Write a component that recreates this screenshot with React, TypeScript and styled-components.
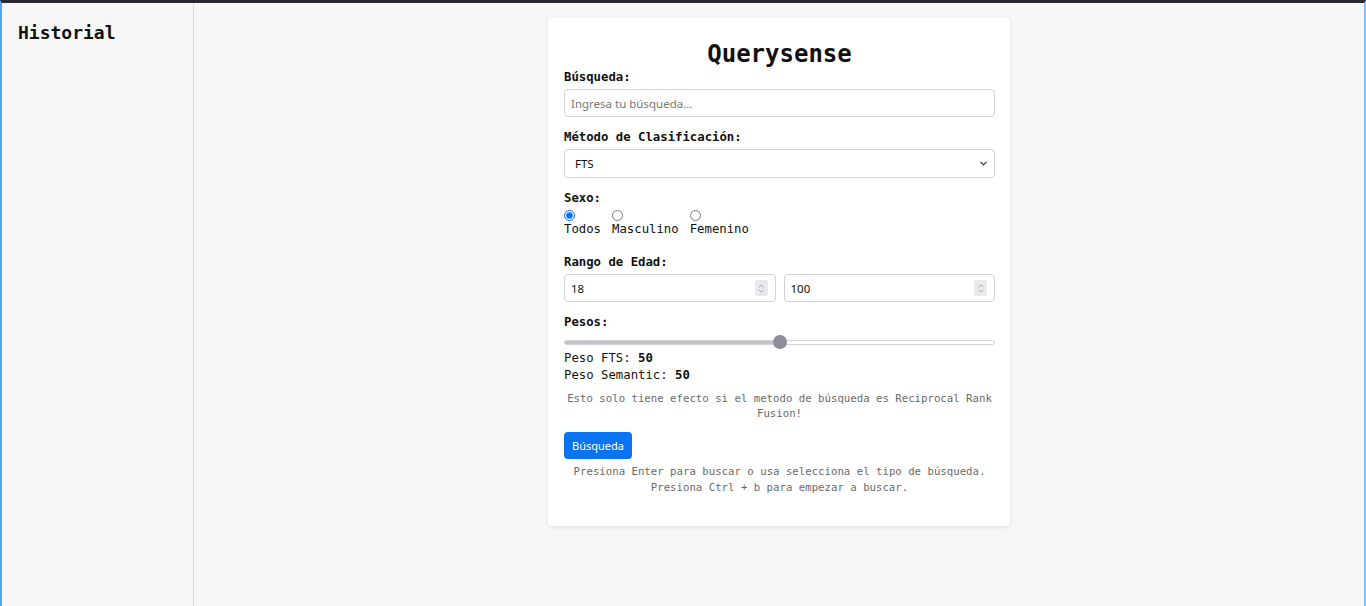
import styled, { createGlobalStyle } from "styled-components";
import { ChevronDown, ChevronUp } from "lucide-react";

const GlobalStyle = createGlobalStyle`
  * { box-sizing: border-box; }
  html, body {
    margin: 0;
    padding: 0;
    background: #f7f7f7;
  }
  body {
    font-family: "DejaVu Sans Mono", "Liberation Mono", monospace;
    color: #111;
  }
`;

const Shell = styled.div`
  display: flex;
  min-height: 100vh;
  border-top: 3px solid #2b2a33;
  border-left: 2px solid #58a6e3;
  border-right: 2px solid #7fc5f5;
  background: #f7f7f7;
`;

const Sidebar = styled.aside`
  width: 192px;
  flex-shrink: 0;
  border-right: 1px solid #dcdcdc;
  padding: 19px 16px;
`;

const SidebarTitle = styled.h2`
  margin: 0;
  font-size: 18px;
  line-height: 22px;
  font-weight: bold;
`;

const Main = styled.main`
  flex: 1;
  display: flex;
  justify-content: center;
  align-items: flex-start;
  padding-top: 15px;
`;

const Card = styled.section`
  width: 462px;
  background: #fff;
  border-radius: 4px;
  box-shadow: 0 1px 4px rgba(0, 0, 0, 0.1);
  padding: 16px 15px 30px 16px;
`;

const Title = styled.h1`
  margin: 6px 0 0;
  text-align: center;
  font-size: 24px;
  line-height: 29px;
  font-weight: bold;
`;

const Field = styled.div<{ $gap?: number }>`
  margin-bottom: ${(p) => p.$gap ?? 12}px;
`;

const Label = styled.label`
  display: block;
  font-size: 12.3px;
  line-height: 16px;
  font-weight: bold;
  margin-bottom: 4px;
`;

const controlBase = `
  width: 100%;
  border: 1px solid #d2d2d2;
  border-radius: 4px;
  background: #fff;
  font-family: "Noto Sans", sans-serif;
  font-size: 11.5px;
  color: #111;
  padding: 0 6px;
  outline: none;
`;

const TextInput = styled.input`
  ${controlBase}
  height: 28px;
  &::placeholder { color: #777; }
`;

const SelectWrap = styled.div`
  position: relative;
`;

const Select = styled.select`
  ${controlBase}
  appearance: none;
  height: 29px;
  padding: 0 24px 0 10px;
`;

const SelectIcon = styled(ChevronDown)`
  position: absolute;
  right: 6px;
  top: 9px;
  pointer-events: none;
  color: #222;
`;

const RadioRow = styled.div`
  display: flex;
  gap: 11px;
`;

const RadioOption = styled.label`
  display: flex;
  flex-direction: column;
  align-items: flex-start;
  font-size: 12.3px;
  line-height: 16px;
`;

const Radio = styled.input`
  margin: 0;
  width: 11px;
  height: 11px;
`;

const AgeRow = styled.div`
  display: flex;
  gap: 8px;
`;

const NumberWrap = styled.div`
  position: relative;
  flex: 1;
`;

const NumberInput = styled.input`
  ${controlBase}
  height: 28px;
  padding-right: 26px;
  appearance: textfield;

  &::-webkit-inner-spin-button,
  &::-webkit-outer-spin-button {
    appearance: none;
    margin: 0;
  }
`;

const Spinner = styled.div`
  position: absolute;
  right: 8px;
  top: 6px;
  width: 13px;
  height: 16px;
  display: flex;
  flex-direction: column;
  align-items: center;
  justify-content: center;
  background: #e9e9ed;
  border-radius: 2px;
  color: #8a8a8a;
  pointer-events: none;

  svg { display: block; margin: -1.5px 0; }
`;

const Range = styled.input<{ $fill: number }>`
  display: block;
  width: 100%;
  height: 16px;
  margin: 0;
  appearance: none;
  background: transparent;

  &::-webkit-slider-runnable-track {
    height: 5px;
    border-radius: 3px;
    border: 1px solid #d0d0d8;
    background: linear-gradient(
      to right,
      #c4c4cc ${(p) => p.$fill}%,
      #ffffff ${(p) => p.$fill}%
    );
  }

  &::-webkit-slider-thumb {
    appearance: none;
    width: 14px;
    height: 14px;
    border-radius: 50%;
    background: #8d8d9b;
    border: none;
    margin-top: -5.5px;
  }
`;

const WeightLine = styled.div`
  font-size: 12.3px;
  line-height: 17px;

  strong { font-weight: bold; }
`;

const Hint = styled.p<{ $top: number; $lh: number }>`
  margin: ${(p) => p.$top}px 0 0;
  text-align: center;
  font-size: 10.7px;
  line-height: ${(p) => p.$lh}px;
  color: #6a6a6a;
`;

const Button = styled.button`
  display: block;
  margin-top: 11px;
  height: 27px;
  padding: 0 8px;
  border: none;
  border-radius: 4px;
  background: #0a73f2;
  color: #fff;
  font-family: "Noto Sans", sans-serif;
  font-size: 11px;
  cursor: pointer;
`;

const AgeInput = ({ value }: { value: number }) => (
  <NumberWrap>
    <NumberInput type="number" defaultValue={value} />
    <Spinner>
      <ChevronUp size={8} strokeWidth={2} />
      <ChevronDown size={8} strokeWidth={2} />
    </Spinner>
  </NumberWrap>
);

export default function App() {
  const weight = 50;
  return (
    <>
      <GlobalStyle />
      <Shell>
        <Sidebar>
          <SidebarTitle>Historial</SidebarTitle>
        </Sidebar>
        <Main>
          <Card>
            <Title>Querysense</Title>

            <Field>
              <Label htmlFor="q">Búsqueda:</Label>
              <TextInput id="q" type="text" placeholder="Ingresa tu búsqueda..." />
            </Field>

            <Field>
              <Label htmlFor="m">Método de Clasificación:</Label>
              <SelectWrap>
                <Select id="m" defaultValue="fts">
                  <option value="fts">FTS</option>
                  <option value="semantic">Semantic</option>
                  <option value="rrf">Reciprocal Rank Fusion</option>
                </Select>
                <SelectIcon size={11} strokeWidth={2.2} />
              </SelectWrap>
            </Field>

            <Field $gap={17}>
              <Label as="div">Sexo:</Label>
              <RadioRow>
                <RadioOption>
                  <Radio type="radio" name="sexo" defaultChecked />
                  Todos
                </RadioOption>
                <RadioOption>
                  <Radio type="radio" name="sexo" />
                  Masculino
                </RadioOption>
                <RadioOption>
                  <Radio type="radio" name="sexo" />
                  Femenino
                </RadioOption>
              </RadioRow>
            </Field>

            <Field>
              <Label as="div">Rango de Edad:</Label>
              <AgeRow>
                <AgeInput value={18} />
                <AgeInput value={100} />
              </AgeRow>
            </Field>

            <div>
              <Label as="div">Pesos:</Label>
              <Range
                type="range"
                min={0}
                max={100}
                defaultValue={weight}
                $fill={weight}
                disabled
              />
              <WeightLine>
                Peso FTS: <strong>{weight}</strong>
              </WeightLine>
              <WeightLine>
                Peso Semantic: <strong>{100 - weight}</strong>
              </WeightLine>
              <Hint $top={7} $lh={15}>
                Esto solo tiene efecto si el metodo de búsqueda es Reciprocal Rank Fusion!
              </Hint>
            </div>

            <Button type="button">Búsqueda</Button>

            <Hint $top={5} $lh={16}>
              Presiona Enter para buscar o usa selecciona el tipo de búsqueda.
              <br />
              Presiona Ctrl + b para empezar a buscar.
            </Hint>
          </Card>
        </Main>
      </Shell>
    </>
  );
}
